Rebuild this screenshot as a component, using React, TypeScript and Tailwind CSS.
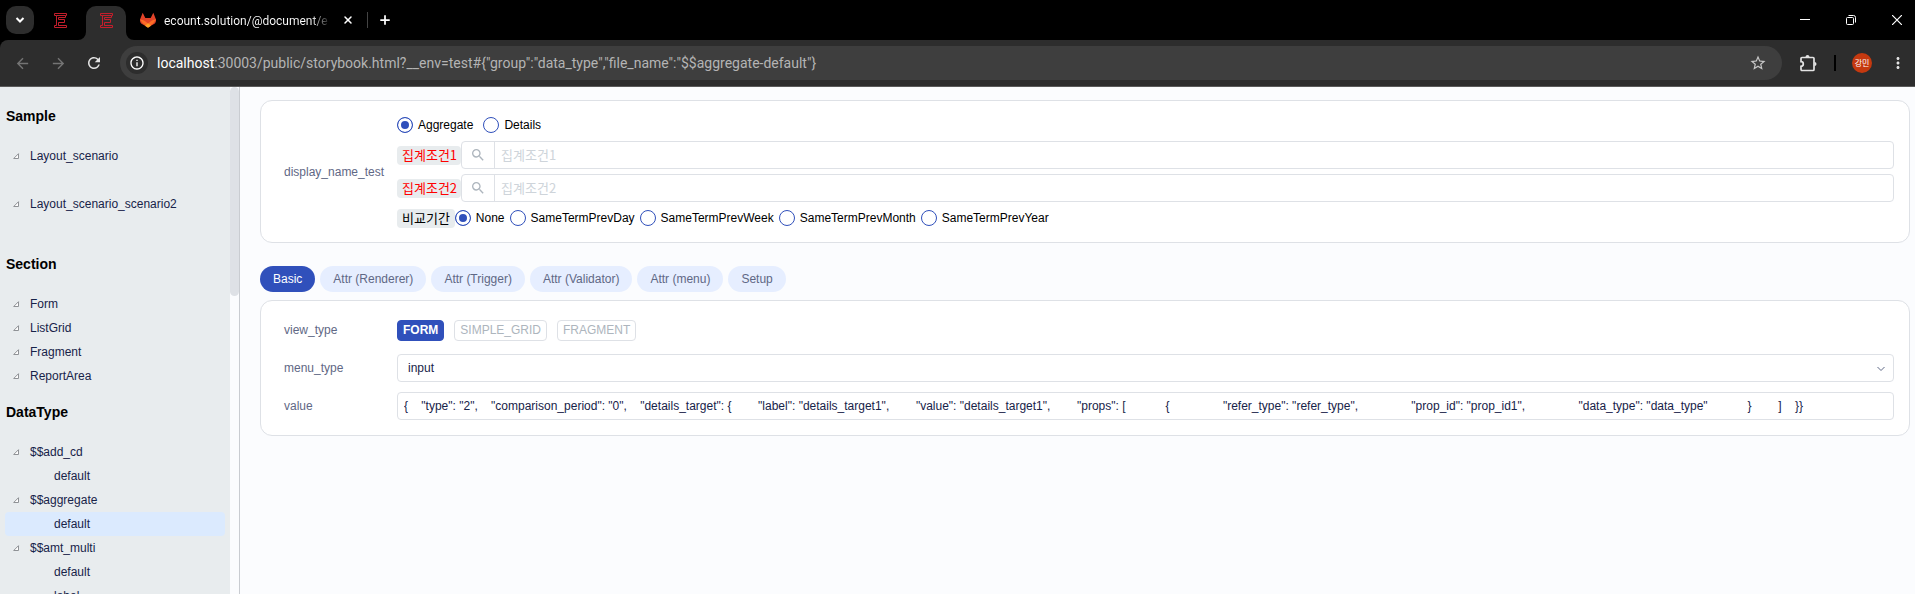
import React, { useState } from "react";
import { LuX, LuPlus } from "react-icons/lu";
import { MdOutlineInfo, MdRefresh, MdArrowBack, MdArrowForward, MdStarOutline, MdMoreVert, MdSearch } from "react-icons/md";

const VALUE_TEXT =
  '{    "type": "2",    "comparison_period": "0",    "details_target": {        "label": "details_target1",        "value": "details_target1",        "props": [            {                "refer_type": "refer_type",                "prop_id": "prop_id1",                "data_type": "data_type"            }        ]    }}';

function EcountIcon() {
  return (
    <svg width="13" height="15" viewBox="0 0 13 15" fill="none" stroke="#c41e2c" strokeWidth="1">
      <path d="M12.500.5H.5v2h2v10h-2v2h12v-2h-8v-3h6v-3h-6v-2h7v-2h1z" />
      <path d="M2.500 2.500h9M4.500 12.500h7" />
    </svg>
  );
}

function GitlabIcon() {
  return (
    <svg width="16" height="16" viewBox="0 0 16 16">
      <path d="M2.700.8 5.300 6h5.400L13.300.8 16 7.500c.2 2-.6 3.500-2 4.600L8 15.600l-6-3.500C.6 11-.2 9.500 0 7.500z" fill="#e24329" />
      <path d="M8 15.600 3 11.500 0 7.500c2 0 4 .8 5.500 2L8 11.500l2.500-2C12 8.300 14 7.500 16 7.500l-3 4z" fill="#fc6d26" />
      <path d="m8 11.300 3 2.500-3 1.900-3-1.900z" fill="#fca326" />
    </svg>
  );
}

function PuzzleIcon() {
  return (
    <svg width="17" height="17" viewBox="0 0 17 17">
      <path d="M2 2.500h11a1 1 0 0 1 1 1v11a1 1 0 0 1-1 1H2a1 1 0 0 1-1-1v-3.200a2.300 2.300 0 0 0 0-4.600V3.500a1 1 0 0 1 1-1z" fill="none" stroke="currentColor" strokeWidth="1.700" />
      <path d="M5.500 2a2 2 0 0 1 4 0zM14.500 7a2 2 0 0 1 0 4z" fill="currentColor" />
    </svg>
  );
}

function BrowserChrome() {
  return (
    <header className="shrink-0 bg-black font-['Roboto',sans-serif] text-white">
      <div className="flex h-10 items-center justify-between">
        <div className="flex h-full items-center">
          <button aria-label="Search tabs" className="ml-1.5 flex size-7 items-center justify-center rounded-[10px] bg-[#2d2d2d]">
            <svg width="10" height="10" viewBox="0 0 10 10" fill="none" stroke="white" strokeWidth="2"><path d="m1.500 3 3.500 3.500L8.500 3" /></svg>
          </button>
          <button aria-label="Ecount tab" className="flex h-full w-[52px] items-center justify-center"><EcountIcon /></button>
          <button aria-label="Ecount storybook tab" className="relative mt-1.5 flex h-[34px] w-10 items-center justify-center rounded-t-[10px] bg-[#2d2d2d] pb-1.5">
            <EcountIcon />
            <svg className="absolute bottom-0 -left-2" width="8" height="8"><path d="M8 0v8H0a8 8 0 0 0 8-8" fill="#2d2d2d" /></svg>
            <svg className="absolute -right-2 bottom-0" width="8" height="8"><path d="M0 0v8h8a8 8 0 0 1-8-8" fill="#2d2d2d" /></svg>
          </button>
          <div className="ml-3.5 flex items-center">
            <GitlabIcon />
            <span className="ml-2 w-[167px] overflow-hidden bg-linear-to-r from-white from-88% to-transparent bg-clip-text pt-0.5 text-[12px] whitespace-nowrap text-transparent">ecount.solution/@document/e</span>
            <button aria-label="Close tab" className="ml-2.5 flex size-3.5 items-center justify-center"><LuX size={12} strokeWidth={3} /></button>
          </div>
          <div className="ml-3 h-4 w-px bg-[#444]" />
          <button aria-label="New tab" className="ml-2.5 flex size-3.5 items-center justify-center"><LuPlus size={14} strokeWidth={3} /></button>
        </div>
        <div className="flex items-center gap-9 pr-[13px]">
          <button aria-label="Minimize"><svg className="block" width="10" height="10"><path d="M0 4.500h10" stroke="white" /></svg></button>
          <button aria-label="Restore"><svg className="block" width="10" height="10" fill="none" stroke="white"><rect x=".5" y="2.500" width="7" height="7" rx="1" /><path d="M2.500.5h5a2 2 0 0 1 2 2v5" /></svg></button>
          <button aria-label="Close window"><svg className="block" width="10" height="10" stroke="white" strokeWidth="1.200"><path d="m0 0 10 10M10 0 0 10" /></svg></button>
        </div>
      </div>
      <div className="flex h-[47px] items-center rounded-tl-lg border-b border-[#5a5a5a] bg-[#2d2d2d]">
        <button aria-label="Back" className="ml-3.5 text-[#747474]"><MdArrowBack size={17} /></button>
        <button aria-label="Forward" className="ml-[19px] text-[#747474]"><MdArrowForward size={17} /></button>
        <button aria-label="Reload" className="ml-[18px] text-[#e3e3e3]"><MdRefresh size={18} /></button>
        <div className="ml-[17px] flex h-[34px] min-w-0 flex-1 items-center rounded-full bg-[#3e3e3e] pr-[15px] pl-1.5">
          <button aria-label="Site information" className="flex size-[22px] shrink-0 items-center justify-center rounded-full bg-[#2d2d2d]"><MdOutlineInfo size={16} /></button>
          <div className="ml-[9px] flex-1 truncate text-[14px] text-[#b4b4b4]">
            <span className="text-white">localhost</span>:30003/public/storybook.html?__env=test#{'{"group":"data_type","file_name":"$$aggregate-default"}'}
          </div>
          <button aria-label="Bookmark" className="text-[#c7c7c7]"><MdStarOutline size={18} /></button>
        </div>
        <button aria-label="Extensions" className="ml-[18px] text-[#e3e3e3]"><PuzzleIcon /></button>
        <div className="ml-[17px] h-4 w-0.5 bg-black" />
        <button className="ml-4 flex size-5 items-center justify-center rounded-full bg-[#c5390f] font-['Noto_Sans_CJK_KR',sans-serif] text-[8px]">강민</button>
        <button aria-label="Menu" className="mr-2 ml-[17px] text-[#e3e3e3]"><MdMoreVert size={18} /></button>
      </div>
    </header>
  );
}

type Entry = { name: string; children: string[] };

const NAV: { title: string; entries: Entry[] }[] = [
  { title: "Sample", entries: [{ name: "Layout_scenario", children: [""] }, { name: "Layout_scenario_scenario2", children: [""] }] },
  { title: "Section", entries: ["Form", "ListGrid", "Fragment", "ReportArea"].map((name) => ({ name, children: [] })) },
  {
    title: "DataType",
    entries: [
      { name: "$$add_cd", children: ["default"] },
      { name: "$$aggregate", children: ["default"] },
      { name: "$$amt_multi", children: ["default", "label"] },
    ],
  },
];

function Sidebar() {
  return (
    <aside className="flex w-60 shrink-0 border-r border-[#c9ccd1]">
      <nav className="min-w-0 flex-1 overflow-hidden bg-[#e8ecee] px-[5px] pt-[5px] text-[#172349]">
        {NAV.map((group) => (
          <section key={group.title}>
            <h2 className="flex h-[52px] items-center pb-1 pl-px text-sm font-bold text-black">{group.title}</h2>
            {group.entries.map((entry) => (
              <React.Fragment key={entry.name}>
                <a href="#" className="flex h-6 items-center pl-[7px]">
                  <svg width="8" height="8" className="mr-2.5" fill="white" stroke="#8f9296"><path d="M1.700 6.500h4.800V1.700z" /></svg>
                  {entry.name}
                </a>
                {entry.children.map((child) =>
                  child ? (
                    <a key={child} href="#" className={entry.name === "$$aggregate" ? "flex h-6 items-center rounded bg-[#dbeafe] pl-[49px]" : "flex h-6 items-center pl-[49px]"}>
                      {child}
                    </a>
                  ) : (
                    <div key="blank" className="h-6" />
                  ),
                )}
              </React.Fragment>
            ))}
          </section>
        ))}
      </nav>
      <div className="w-[9px]">
        <div className="h-[209px] rounded-full bg-[#dee1e6]" />
      </div>
    </aside>
  );
}

function Radio({ name, label, value, onChange }: { name: string; label: string; value: string; onChange: (v: string) => void }) {
  return (
    <label className="flex items-center gap-[5px]">
      <input
        type="radio"
        name={name}
        checked={value === label}
        onChange={() => onChange(label)}
        className="size-4 appearance-none rounded-full border border-[#3050bb] bg-white checked:bg-[#3050bb] checked:shadow-[inset_0_0_0_3px_white]"
      />
      {label}
    </label>
  );
}

function ConditionRow({ id, label }: { id: string; label: string }) {
  return (
    <div className="flex items-center">
      <label htmlFor={id} className="flex h-[19px] items-center rounded bg-[#e8ecee] pr-1 pl-[5px] font-['Noto_Sans_CJK_KR',sans-serif] text-[13px] text-[#f00]">{label}</label>
      <div className="flex h-7 flex-1 rounded border border-[#dee1e6] bg-white">
        <button aria-label={`Search ${label}`} className="flex w-8 items-center justify-center text-[#adb5bd]"><MdSearch size={16} /></button>
        <input id={id} placeholder={label} className="min-w-0 flex-1 border-l border-[#dee1e6] px-1.5 font-['Noto_Sans_CJK_KR',sans-serif] text-[13px] outline-none placeholder:text-[#ced4da]" />
      </div>
    </div>
  );
}

const TABS = ["Basic", "Attr (Renderer)", "Attr (Trigger)", "Attr (Validator)", "Attr (menu)", "Setup"];
const VIEWS = ["FORM", "SIMPLE_GRID", "FRAGMENT"];
const PERIODS = ["None", "SameTermPrevDay", "SameTermPrevWeek", "SameTermPrevMonth", "SameTermPrevYear"];

export default function App() {
  const [mode, setMode] = useState("Aggregate");
  const [period, setPeriod] = useState("None");
  const [tab, setTab] = useState("Basic");
  const [view, setView] = useState("FORM");
  const [value, setValue] = useState(VALUE_TEXT);

  return (
    <div className="flex h-screen flex-col overflow-hidden bg-[#fbfcfe] font-['Liberation_Sans','Noto_Sans_CJK_KR',sans-serif] text-xs text-black">
      <BrowserChrome />
      <div className="flex min-h-0 flex-1">
        <Sidebar />
        <main className="min-w-0 flex-1 overflow-hidden pt-[13px] pr-[5px] pl-5">
          <section className="flex items-center rounded-xl border border-[#dee1e6] bg-white py-[13px] pr-[15px] pl-[23px]">
            <div className="w-[113px] shrink-0 text-[#5f6885]">display_name_test</div>
            <div className="flex flex-1 flex-col gap-[5px]">
              <div className="flex h-[22px] items-center gap-2.5">
                <Radio name="mode" label="Aggregate" value={mode} onChange={setMode} />
                <Radio name="mode" label="Details" value={mode} onChange={setMode} />
              </div>
              <ConditionRow id="condition-1" label="집계조건1" />
              <ConditionRow id="condition-2" label="집계조건2" />
              <div className="flex h-[22px] items-center">
                <span className="flex h-[19px] items-center rounded bg-[#e8ecee] px-[5px] font-['Noto_Sans_CJK_KR',sans-serif] text-[13px]">비교기간</span>
                <div className="flex items-center gap-[5px]">
                  {PERIODS.map((p) => (
                    <Radio key={p} name="period" label={p} value={period} onChange={setPeriod} />
                  ))}
                </div>
              </div>
            </div>
          </section>

          <div role="tablist" className="mt-[23px] flex gap-[5px]">
            {TABS.map((t) => (
              <button
                key={t}
                role="tab"
                aria-selected={t === tab}
                onClick={() => setTab(t)}
                className={t === tab ? "h-[26px] rounded-full bg-[#3050bb] px-[13px] text-white" : "h-[26px] rounded-full bg-[#e6eeff] px-[13px] text-[#5f6885]"}
              >
                {t}
              </button>
            ))}
          </div>

          <section className="mt-2 flex flex-col gap-2.5 rounded-xl border border-[#dee1e6] bg-white py-[15px] pr-[15px] pl-[23px]">
            <div className="flex h-7 items-center">
              <div className="w-[113px] shrink-0 text-[#5f6885]">view_type</div>
              <div className="flex gap-2.5">
                {VIEWS.map((v) => (
                  <button
                    key={v}
                    onClick={() => setView(v)}
                    className={v === view ? "h-[21px] rounded border border-[#3050bb] bg-[#3050bb] px-[5px] font-bold text-white" : "h-[21px] rounded border border-[#dee1e6] bg-white px-[5px] text-[#adb5bd]"}
                  >
                    {v}
                  </button>
                ))}
              </div>
            </div>
            <div className="flex items-center">
              <label htmlFor="menu-type" className="w-[113px] shrink-0 text-[#5f6885]">menu_type</label>
              <div className="relative flex-1">
                <select id="menu-type" className="block h-7 w-full appearance-none rounded border border-[#dee1e6] bg-white px-2.5 text-[#172349]">
                  <option>input</option>
                </select>
                <svg className="pointer-events-none absolute top-3 right-[9px]" width="8" height="6" fill="none" stroke="#5f6885"><path d="M.5 1 4 4.500 7.500 1" /></svg>
              </div>
            </div>
            <div className="flex items-center">
              <label htmlFor="value" className="w-[113px] shrink-0 text-[#5f6885]">value</label>
              <input id="value" value={value} onChange={(e) => setValue(e.target.value)} className="h-7 min-w-0 flex-1 rounded border border-[#dee1e6] bg-white px-1.5 text-[#172349] outline-none" />
            </div>
          </section>
        </main>
      </div>
    </div>
  );
}
